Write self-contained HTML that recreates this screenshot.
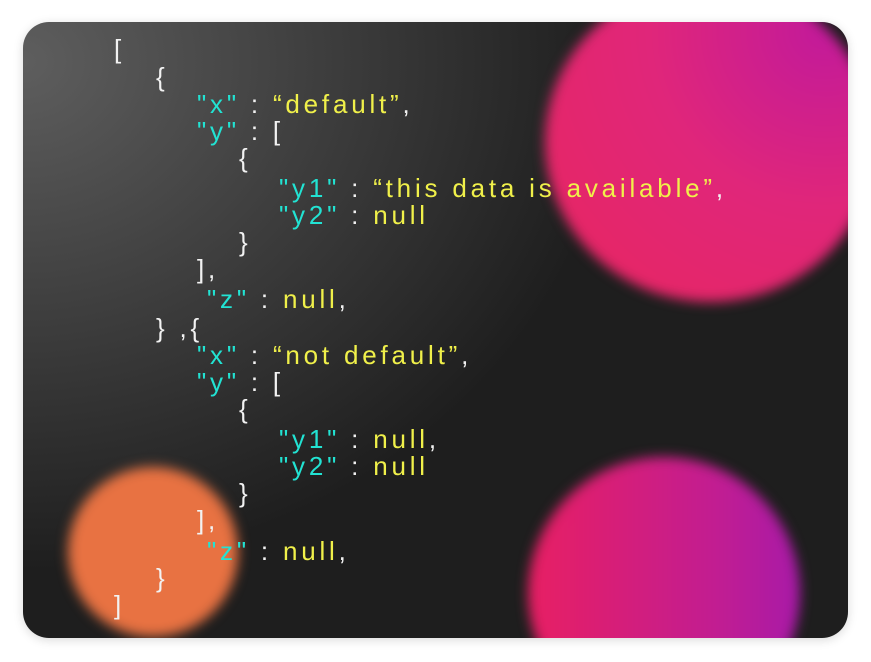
<!DOCTYPE html><html><head><style>
html,body{margin:0;padding:0;width:871px;height:662px;background:#fff;overflow:hidden}
.card{position:absolute;left:23px;top:22px;width:825px;height:616px;border-radius:26px;overflow:hidden;
background:radial-gradient(ellipse 700px 600px at 0px 40px,#5e5e5e 0%,#3c3c3c 45%,#1e1e1e 85%);box-shadow:0 2px 10px rgba(0,0,0,.15)}
.b{position:absolute;border-radius:50%;filter:blur(6px)}
.l{position:absolute;font-family:"Liberation Sans",sans-serif;font-size:26px;line-height:27px;letter-spacing:3.8px;color:#f2f2f2;white-space:pre}
.c{color:#22e3d3}.y{color:#f0f04a}
</style></head><body>
<div class="card">
<div class="b" style="left:522px;top:-40px;width:330px;height:320px;background:radial-gradient(circle at 85% 15%,#c21a9a,#e0267a 45%,#e8265e)"></div>
<div class="b" style="left:505px;top:435px;width:272px;height:272px;background:linear-gradient(90deg,#e81f63,#c11d92 70%,#a81aa8)"></div>
<div class="b" style="left:45px;top:445px;width:170px;height:170px;background:#e87242"></div>
</div>
<div class="l" style="left:114px;top:36px">[</div>
<div class="l" style="left:156px;top:64px">{</div>
<div class="l" style="left:197px;top:91px"><span class="c">"x"</span> : <span class="y">“default”</span>,</div>
<div class="l" style="left:197px;top:118px"><span class="c">"y"</span> : [</div>
<div class="l" style="left:239px;top:145px">{</div>
<div class="l" style="left:279px;top:175px"><span class="c">"y1"</span> : <span class="y">“this data is available”</span>,</div>
<div class="l" style="left:279px;top:202px"><span class="c">"y2"</span> : <span class="y">null</span></div>
<div class="l" style="left:239px;top:229px">}</div>
<div class="l" style="left:197px;top:256px">],</div>
<div class="l" style="left:207px;top:286px"><span class="c">"z"</span> : <span class="y">null</span>,</div>
<div class="l" style="left:156px;top:315px">} ,{</div>
<div class="l" style="left:197px;top:342px"><span class="c">"x"</span> : <span class="y">“not default”</span>,</div>
<div class="l" style="left:197px;top:369px"><span class="c">"y"</span> : [</div>
<div class="l" style="left:239px;top:396px">{</div>
<div class="l" style="left:279px;top:426px"><span class="c">"y1"</span> : <span class="y">null</span>,</div>
<div class="l" style="left:279px;top:453px"><span class="c">"y2"</span> : <span class="y">null</span></div>
<div class="l" style="left:239px;top:480px">}</div>
<div class="l" style="left:197px;top:507px">],</div>
<div class="l" style="left:207px;top:538px"><span class="c">"z"</span> : <span class="y">null</span>,</div>
<div class="l" style="left:156px;top:565px">}</div>
<div class="l" style="left:114px;top:592px">]</div>
</body></html>
